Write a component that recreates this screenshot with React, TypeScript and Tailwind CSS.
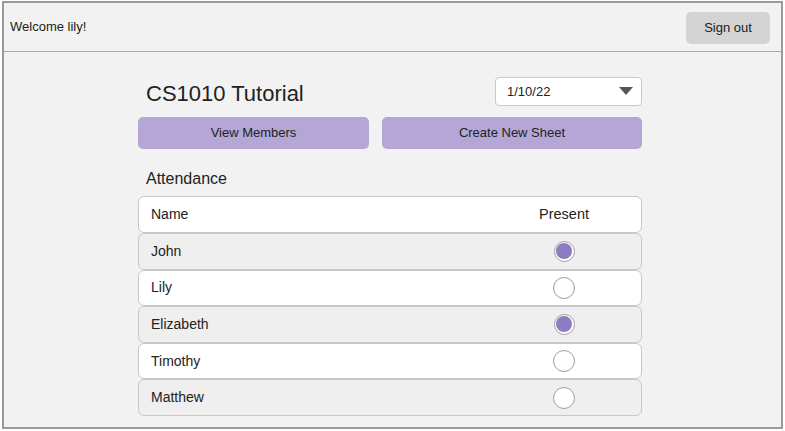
const rows = [
  { name: 'John', present: true, shade: true },
  { name: 'Lily', present: false, shade: false },
  { name: 'Elizabeth', present: true, shade: true },
  { name: 'Timothy', present: false, shade: false },
  { name: 'Matthew', present: false, shade: true },
];

function Radio({ on }: { on: boolean }) {
  return on ? (
    <span className="flex h-[21px] w-[21px] items-center justify-center rounded-full border border-[#9e9e9e] bg-white">
      <span className="h-[16px] w-[16px] rounded-full bg-[#8e7cc3]" />
    </span>
  ) : (
    <span className="h-[22px] w-[22px] rounded-full border border-[#9e9e9e] bg-white" />
  );
}

export default function App() {
  return (
    <div className="h-[431px] w-[785px] bg-white pl-[2px] pt-[1px] font-['Liberation_Sans',Arial,sans-serif] text-[#222]">
      <div className="flex h-[428px] w-[781px] flex-col border-2 border-[#9a9a9a] bg-[#f2f2f2]">
        <header className="flex h-[49px] shrink-0 items-center justify-between border-b border-[#a8a8a8] pl-[6px] pr-[11px]">
          <span className="text-[13px]">Welcome lily!</span>
          <button className="mt-[2px] h-[32px] w-[84px] rounded-[5px] bg-[#d4d4d4] text-[13px]">Sign out</button>
        </header>

        <main className="ml-[134px] mt-[25px] w-[504px]">
          <div className="flex items-center justify-between">
            <h1 className="pl-[8px] pt-[4px] text-[22px] leading-none">CS1010 Tutorial</h1>
            <div className="flex h-[29px] w-[147px] items-center justify-between rounded-[4px] border border-[#c8c8c8] bg-white pl-[11px] pr-[8px] text-[13px]">
              <span>1/10/22</span>
              <svg width="14" height="9" viewBox="0 0 14 9">
                <path d="M0 0 L14 0 L7 8 Z" fill="#555" />
              </svg>
            </div>
          </div>

          <div className="mt-[11px] flex gap-[13px]">
            <button className="h-[32px] w-[231px] rounded-[5px] bg-[#b4a7d6] text-[13px]">View Members</button>
            <button className="h-[32px] flex-1 rounded-[5px] bg-[#b4a7d6] text-[13px]">Create New Sheet</button>
          </div>

          <h2 className="mt-[22px] pl-[8px] text-[16px] leading-none">Attendance</h2>

          <div className="mt-[9px] flex flex-col">
            <div className="flex h-[37px] items-center justify-between rounded-[6px] border border-[#c8c8c8] bg-white pl-[12px] text-[14px]">
              <span>Name</span>
              <span className="w-[154px] text-center text-[14.5px]">Present</span>
            </div>
            {rows.map((r) => (
              <div
                key={r.name}
                className={`flex h-[36.6px] items-center justify-between rounded-[6px] border border-[#c8c8c8] pl-[12px] text-[14px] ${r.shade ? 'bg-[#efefef]' : 'bg-white'}`}
              >
                <span>{r.name}</span>
                <span className="flex w-[154px] justify-center">
                  <Radio on={r.present} />
                </span>
              </div>
            ))}
          </div>
        </main>
      </div>
    </div>
  );
}
